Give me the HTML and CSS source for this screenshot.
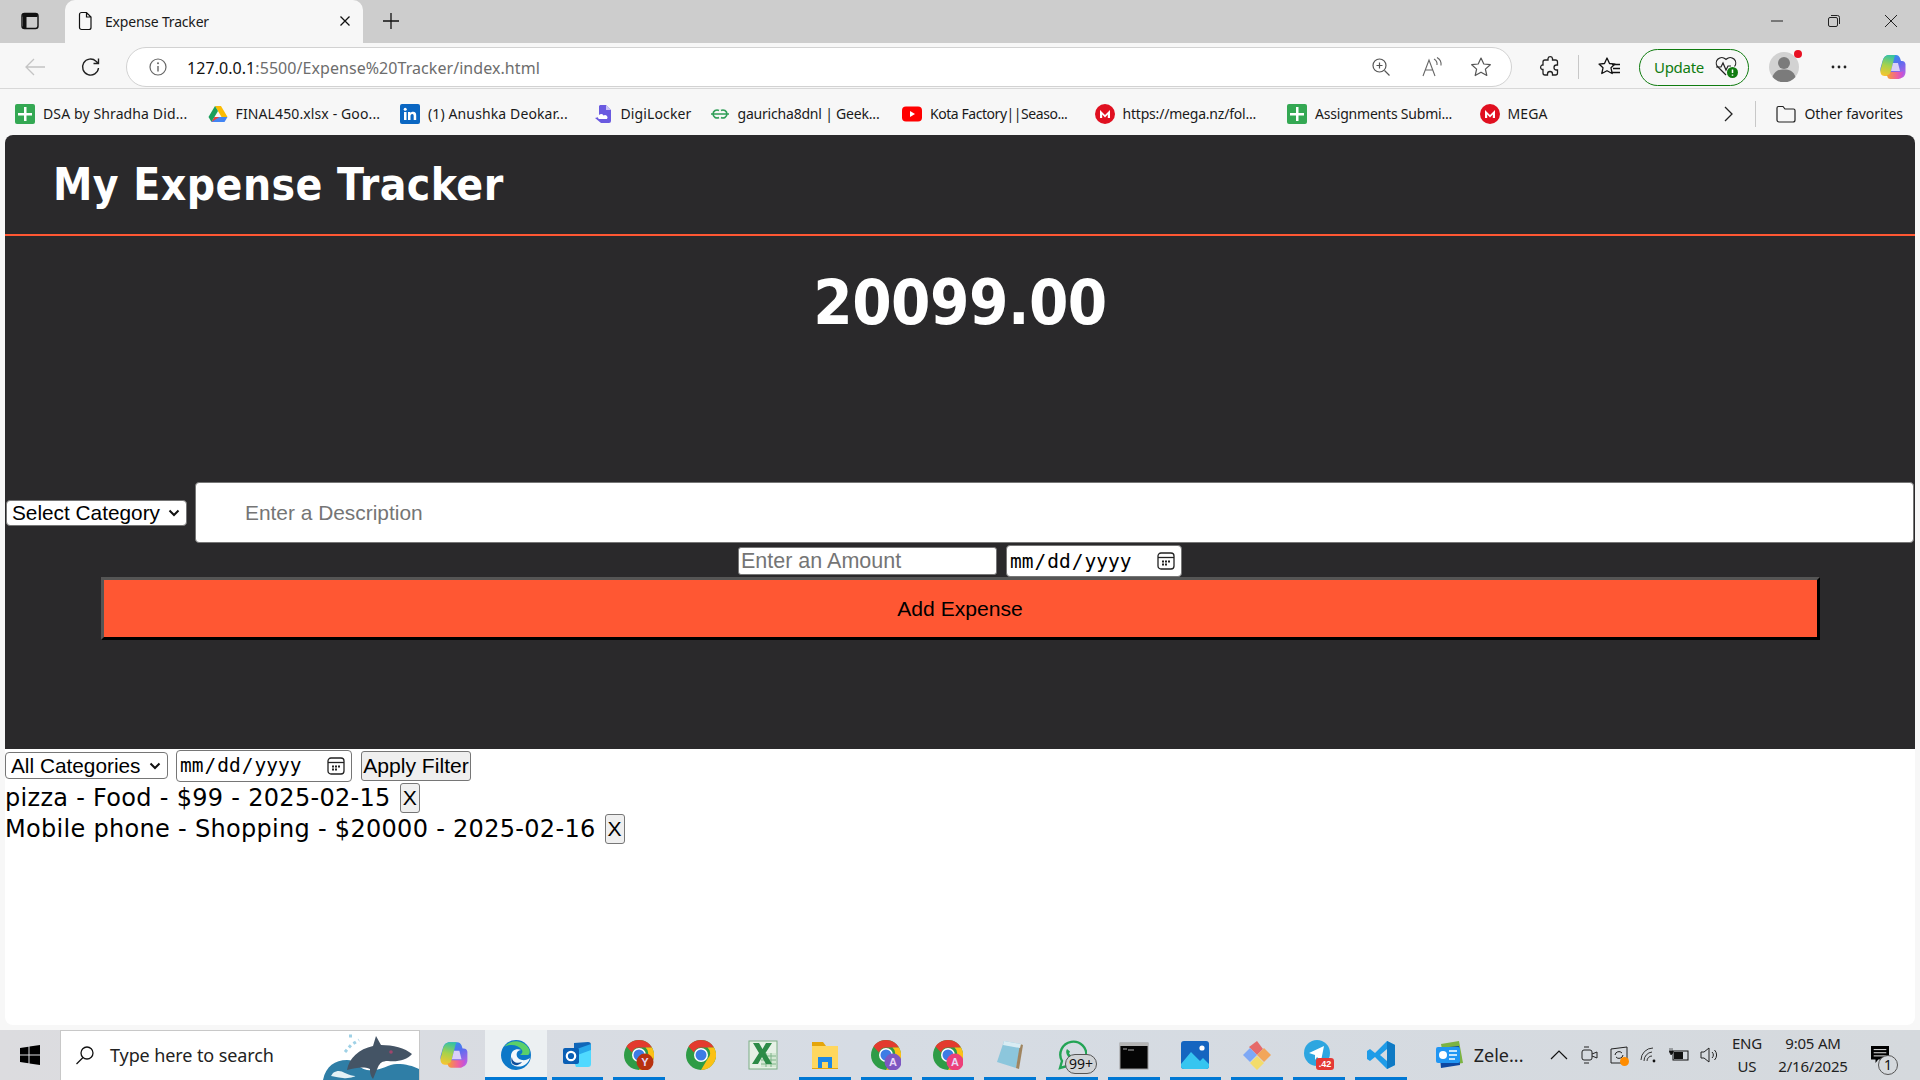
FILE: index.html
```html
<!DOCTYPE html>
<html lang="en">
<head>
<meta charset="utf-8">
<title>Expense Tracker</title>
<link rel="stylesheet" href="styles.css">
</head>
<body>
<div class="tabbar">
  <svg class="ico sidebar" viewBox="0 0 20 20"><rect x="2" y="2.5" width="16" height="15" rx="2.5" fill="none" stroke="#111" stroke-width="1.4"/><path d="M2.5 3h15v3h-15zM3 6h3.500v11H3z" fill="#111"/></svg>
  <div class="tab">
    <svg class="ico doc" viewBox="0 0 20 20"><path d="M4.5 3.5a2 2 0 0 1 2-2h5l4.500 4.500v10.500a2 2 0 0 1-2 2h-7.500a2 2 0 0 1-2-2zM11.500 1.500v4.500h4.500" fill="none" stroke="#111" stroke-width="1.200"/></svg>
    <span class="tabtitle">Expense Tracker</span>
    <svg class="ico tabx" viewBox="0 0 12 12"><path d="M1.500 1.500l9 9M10.500 1.500l-9 9" stroke="#111" stroke-width="1.300"/></svg>
  </div>
  <svg class="ico plus" viewBox="0 0 18 18"><path d="M9 1v16M1 9h16" stroke="#111" stroke-width="1.300"/></svg>
  <div class="winctl">
    <svg class="ico" viewBox="0 0 14 14"><path d="M1 7h12" stroke="#222" stroke-width="1"/></svg>
    <svg class="ico" viewBox="0 0 14 14"><rect x="1.500" y="3.500" width="9" height="9" rx="1.500" fill="none" stroke="#222"/><path d="M4 1.500h6.500a2 2 0 0 1 2 2V10" fill="none" stroke="#222"/></svg>
    <svg class="ico" viewBox="0 0 14 14"><path d="M1 1l12 12M13 1L1 13" stroke="#222" stroke-width="1"/></svg>
  </div>
</div>

<div class="toolbar">
  <svg class="ico back" viewBox="0 0 22 22"><path d="M21 11H2M10 3l-8 8 8 8" fill="none" stroke="#c4c4c4" stroke-width="1.300"/></svg>
  <svg class="ico reload" viewBox="0 0 22 22"><path d="M18.500 12a8 8 0 1 1-2.500-6.800l2.500 2.300M18.500 2.500v5h-5" fill="none" stroke="#222" stroke-width="1.400"/></svg>
  <div class="address">
    <svg class="ico info" viewBox="0 0 20 20"><circle cx="10" cy="10" r="8" fill="none" stroke="#666" stroke-width="1.200"/><path d="M10 9v5.500" stroke="#666" stroke-width="1.400"/><circle cx="10" cy="6.300" r="1" fill="#666"/></svg>
    <span class="url"><span class="host">127.0.0.1</span>:5500/Expense%20Tracker/index.html</span>
    <svg class="ico zoomi" viewBox="0 0 20 20"><circle cx="8.500" cy="8.500" r="6.500" fill="none" stroke="#555" stroke-width="1.200"/><path d="M13.500 13.500l5 5M8.500 5.500v6M5.500 8.500h6" stroke="#555" stroke-width="1.200"/></svg>
    <svg class="ico aloud" viewBox="0 0 22 22"><path d="M2 20L8 4l6 16M4.500 14h7" fill="none" stroke="#666" stroke-width="1.100"/><path d="M13 3a6 6 0 0 1 3 6M16 1.500a8 8 0 0 1 4 8" fill="none" stroke="#666" stroke-width="1.100"/></svg>
    <svg class="ico star" viewBox="0 0 22 22"><path d="M11 2l2.800 6 6.500.7-4.900 4.400 1.400 6.400L11 16.200l-5.800 3.300 1.400-6.400L1.700 8.700 8.200 8z" fill="none" stroke="#555" stroke-width="1.200" stroke-linejoin="round"/></svg>
  </div>
  <svg class="ico ext" viewBox="0 0 22 22"><path d="M9 2.500a2.300 2.300 0 0 1 4.500 0V4h3a2 2 0 0 1 2 2v3h-1a2.500 2.500 0 0 0 0 5h1v3a2 2 0 0 1-2 2h-3v-1a2.500 2.500 0 0 0-5 0v1H6a2 2 0 0 1-2-2v-3.500H3a2.500 2.500 0 0 1 0-4.500h1V6a2 2 0 0 1 2-2h3z" fill="none" stroke="#222" stroke-width="1.300"/></svg>
  <span class="vdiv"></span>
  <svg class="ico favs" viewBox="0 0 24 22"><path d="M10 2l2.500 5.500 5.500.6-4 3.700 1.200 5.700L10 14.700 4.800 17.500 6 11.800 2 8.100l5.500-.6z" fill="none" stroke="#111" stroke-width="1.300" stroke-linejoin="round"/><path d="M15 8.500h8M16 12.500h7M15 16.500h8" stroke="#111" stroke-width="1.300"/></svg>
  <div class="update">
    <span>Update</span>
    <svg class="ico pulse" viewBox="0 0 26 24"><path d="M12 20L3.500 11.500a5.500 5.500 0 0 1 8-7.500l.5.500.5-.5a5.500 5.500 0 0 1 8 7.500" fill="none" stroke="#222" stroke-width="1.200"/><path d="M2 12h5l2-4 3 7 2-4h3" fill="none" stroke="#222" stroke-width="1.200"/><circle cx="18.500" cy="17.500" r="5.500" fill="#107c10"/><path d="M18.500 14.500v3.500M18.500 19.500v1.200" stroke="#fff" stroke-width="1.500"/></svg>
  </div>
  <div class="avatar">
    <svg class="ico avatarimg" viewBox="0 0 30 30"><circle cx="15" cy="15" r="15" fill="#d2d2d2"/><circle cx="15" cy="11" r="6" fill="#7b7b7b"/><path d="M3.500 25c2-6 6-7.500 11.500-7.500S24.500 19 26.500 25A15 15 0 0 1 3.500 25z" fill="#7b7b7b"/></svg>
    <span class="reddot"></span>
  </div>
  <svg class="ico dots" viewBox="0 0 18 6"><circle cx="3" cy="3" r="1.400" fill="#222"/><circle cx="9" cy="3" r="1.400" fill="#222"/><circle cx="15" cy="3" r="1.400" fill="#222"/></svg>
  <svg class="ico copilot" viewBox="0 0 28 28"><defs><linearGradient id="cpA" x1="0.200" y1="0" x2="0.800" y2="1"><stop offset="0" stop-color="#1f9fe8"/><stop offset=".5" stop-color="#5b6cf0"/><stop offset="1" stop-color="#c060e0"/></linearGradient><linearGradient id="cpB" x1="0.500" y1="0" x2="0.300" y2="1"><stop offset="0" stop-color="#38c4a0"/><stop offset=".5" stop-color="#a8d24a"/><stop offset="1" stop-color="#f7c530"/></linearGradient><linearGradient id="cpC" x1="0" y1="0" x2="1" y2="0"><stop offset="0" stop-color="#f7a030"/><stop offset=".6" stop-color="#f0609c"/><stop offset="1" stop-color="#c050e0"/></linearGradient></defs><path d="M10 2h7c2 0 3 1 4 3l1 3h1c2 0 3 1 3.500 3v8c0 3-2 6-5 6h-9c-2 0-3-1-3.500-3l-.5-2H5c-3 0-4-2-3.500-5l2-7c1-4 3-6 6.500-6z" fill="url(#cpA)"/><path d="M10 2c-3 0-5 2-6 5L1.500 17c-.5 3 1 6 4 6h3c1.500 0 2.500-1 3-3l3-12c.5-2 1-5 2-6z" fill="url(#cpB)"/><path d="M8 22c2 0 3-1 3.500-3h8c2 0 3.500 0 5-1 0 5-2 8-5 8h-8c-2 0-3-1-3.500-4z" fill="url(#cpC)"/><path d="M14 10h5l2 8h-9z" fill="#d9d0f8"/></svg>
</div>

<div class="bookmarks">
  <div class="bm"><svg class="ico fav" viewBox="0 0 20 20"><rect width="20" height="20" rx="2" fill="#34a853"/><path d="M9 3h2.500v6H17v2.500h-5.500V17H9v-5.500H3V9h6z" fill="#fff"/></svg><span>DSA by Shradha Did...</span></div>
  <div class="bm"><svg class="ico fav" viewBox="0 0 20 20"><path d="M7 2h6l6.500 11h-6z" fill="#fbbc04"/><path d="M7 2L.5 13l3 5L10 7z" fill="#1a9f5b"/><path d="M3.500 18h13l3-5H6.500z" fill="#4285f4"/><path d="M3.500 18l3-5h5z" fill="#ea4335"/></svg><span>FINAL450.xlsx - Goo...</span></div>
  <div class="bm"><svg class="ico fav" viewBox="0 0 20 20"><rect width="20" height="20" rx="2" fill="#0a66c2"/><path d="M4 8h2.500v8H4zM8 8h2.500v1.200C11 8.300 12 7.800 13.200 7.800c2.200 0 3 1.300 3 3.700V16h-2.500v-4c0-1.300-.4-2-1.400-2s-1.800.7-1.800 2v4H8z" fill="#fff"/><circle cx="5.200" cy="5.200" r="1.500" fill="#fff"/></svg><span>(1) Anushka Deokar...</span></div>
  <div class="bm bm-short"><svg class="ico fav" viewBox="0 0 20 20"><path d="M7 1h6l5 5v11a2 2 0 0 1-2 2H8L2 14l4-1V2z" fill="#6a5ae0"/><path d="M13 1v5h5z" fill="#c9c2f7"/><path d="M5 13a3 3 0 0 1 5.500-1.500A2.500 2.500 0 0 1 14 15H6a2 2 0 0 1-1-2z" fill="#fff"/></svg><span>DigiLocker</span></div>
  <div class="bm bm-tight"><svg class="ico fav" viewBox="0 0 20 20"><path d="M1 10h18M9 6.500a4 4 0 1 0 0 7M11 6.500a4 4 0 1 1 0 7" fill="none" stroke="#2f9e57" stroke-width="1.600"/></svg><span>gauricha8dnl | Geek...</span></div>
  <div class="bm bm-tighter"><svg class="ico fav" viewBox="0 0 20 20"><rect y="2.500" width="20" height="15" rx="4" fill="#f00"/><path d="M8 7l5 3-5 3z" fill="#fff"/></svg><span>Kota Factory||Seaso...</span></div>
  <div class="bm bm-tight"><svg class="ico fav" viewBox="0 0 20 20"><circle cx="10" cy="10" r="10" fill="#e01020"/><path d="M5 14V6l5 5 5-5v8h-2.200V10.500L10 13.500 7.200 10.500V14z" fill="#fff"/></svg><span>https://mega.nz/fol...</span></div>
  <div class="bm bm-tight"><svg class="ico fav" viewBox="0 0 20 20"><rect width="20" height="20" rx="2" fill="#34a853"/><path d="M9 3h2.500v6H17v2.500h-5.500V17H9v-5.500H3V9h6z" fill="#fff"/></svg><span>Assignments Submi...</span></div>
  <div class="bm bm-last"><svg class="ico fav" viewBox="0 0 20 20"><circle cx="10" cy="10" r="10" fill="#e01020"/><path d="M5 14V6l5 5 5-5v8h-2.200V10.500L10 13.500 7.200 10.500V14z" fill="#fff"/></svg><span>MEGA</span></div>
  <svg class="ico chev" viewBox="0 0 12 18"><path d="M3 2l7 7-7 7" fill="none" stroke="#222" stroke-width="1.300"/></svg>
  <span class="vdiv vdiv-bm"></span>
  <div class="bm bm-other"><svg class="ico folder" viewBox="0 0 22 20"><path d="M2 4a1.500 1.500 0 0 1 1.500-1.500h4.500L10 5h8.500A1.500 1.500 0 0 1 20 6.500V16a2 2 0 0 1-2 2H4a2 2 0 0 1-2-2z" fill="none" stroke="#222" stroke-width="1.200"/></svg><span>Other favorites</span></div>
</div>

<div class="viewport">
  <main class="page">
    <section class="dark">
      <header class="head"><h1 class="title">My Expense Tracker</h1></header>
      <div class="total">20099.00</div>
      <form class="form">
        <div class="row-top">
          <span class="selwrap selwrap-cat">
            <select class="sel sel-cat"><option>Select Category</option></select>
            <svg class="selchev" viewBox="0 0 12 8"><path d="M1.500 1.500L6 6l4.500-4.500" fill="none" stroke="#111" stroke-width="2"/></svg>
          </span>
          <input class="desc" type="text" placeholder="Enter a Description">
        </div>
        <div class="row-mid">
          <input class="amount" type="text" placeholder="Enter an Amount">
          <span class="datewrap">
            <input class="date" type="date">
            <svg class="cal" viewBox="0 0 18 18"><rect x="1" y="1" width="16" height="16" rx="3" fill="none" stroke="#222" stroke-width="1.300"/><path d="M1 5.500h16" stroke="#222" stroke-width="1.300"/><path d="M5 8.500h2v2H5zM8 8.500h2v2H8zM11 8.500h2v2h-2zM5 11.500h2v2H5zM8 11.500h2v2H8z" fill="#222"/></svg>
          </span>
        </div>
        <button class="add" type="button">Add Expense</button>
      </form>
    </section>
    <section class="light">
      <div class="filter">
        <span class="selwrap selwrap-all">
          <select class="sel sel-all"><option>All Categories</option></select>
          <svg class="selchev" viewBox="0 0 12 8"><path d="M1.500 1.500L6 6l4.500-4.500" fill="none" stroke="#111" stroke-width="2"/></svg>
        </span>
        <span class="datewrap datewrap-filter">
          <input class="date date-filter" type="date">
          <svg class="cal" viewBox="0 0 18 18"><rect x="1" y="1" width="16" height="16" rx="3" fill="none" stroke="#222" stroke-width="1.300"/><path d="M1 5.500h16" stroke="#222" stroke-width="1.300"/><path d="M5 8.500h2v2H5zM8 8.500h2v2H8zM11 8.500h2v2h-2zM5 11.500h2v2H5zM8 11.500h2v2H8z" fill="#222"/></svg>
        </span>
        <button class="apply" type="button">Apply Filter</button>
      </div>
      <ul class="list">
        <li class="item">pizza - Food - $99 - 2025-02-15<button class="del" type="button">X</button></li>
        <li class="item">Mobile phone - Shopping - $20000 - 2025-02-16<button class="del" type="button">X</button></li>
      </ul>
    </section>
  </main>
</div>

<footer class="taskbar">
  <div class="start"><svg class="ico winlogo" viewBox="0 0 20 20"><path d="M0 3l8.500-1.300V9.500H0zM9.500 1.500L20 0v9.500H9.500zM0 10.500h8.500v7.800L0 17zM9.500 10.500H20V20L9.500 18.500z" fill="#000"/></svg></div>
  <div class="search">
    <svg class="ico lens" viewBox="0 0 20 20"><circle cx="12" cy="8" r="6" fill="none" stroke="#111" stroke-width="1.300"/><path d="M8 12.500L1.500 19" stroke="#111" stroke-width="1.300"/></svg>
    <span class="searchtext">Type here to search</span>
    <svg class="whale" viewBox="0 0 96 50"><path d="M0 50c3-14 12-20 24-20 8 0 10 8 20 10 14 2 20-6 30-6 9 0 16 2 22 5v11z" fill="#2f7ea6"/><path d="M10 43c5-3 8-2 12 0s8 3 10 3-6 3-12 2-8-1-12-2z" fill="#e4f1f5"/><path d="M24 40c2-12 12-21 26-24l3-10 5 9c12 0 24 3 31 9-5 6-14 8-24 7-6 0-8 2-10 6l-5 12c-3-4-3-7-3-10-7-3-14-1-23 1z" fill="#445465"/><circle cx="68" cy="22" r="1.800" fill="#a0456c"/><path d="M22 22l6-7 8-5M26 6h6" fill="none" stroke="#9fd1e6" stroke-width="3" stroke-dasharray="3 3"/></svg>
  </div>
  <div class="apps">
    <div class="app"><svg class="ico appi" viewBox="0 0 28 28"><path d="M10 2h7c2 0 3 1 4 3l1 3h1c2 0 3 1 3.500 3v8c0 3-2 6-5 6h-9c-2 0-3-1-3.500-3l-.5-2H5c-3 0-4-2-3.500-5l2-7c1-4 3-6 6.500-6z" fill="url(#cpA)"/><path d="M10 2c-3 0-5 2-6 5L1.500 17c-.5 3 1 6 4 6h3c1.500 0 2.500-1 3-3l3-12c.5-2 1-5 2-6z" fill="url(#cpB)"/><path d="M8 22c2 0 3-1 3.500-3h8c2 0 3.500 0 5-1 0 5-2 8-5 8h-8c-2 0-3-1-3.500-4z" fill="url(#cpC)"/><path d="M14 10h5l2 8h-9z" fill="#d9d0f8"/></svg></div>
    <div class="app app-active"><svg class="ico appi" viewBox="0 0 30 30"><circle cx="15" cy="15" r="15" fill="#0c78c8"/><path d="M28 9A15 15 0 0 0 3 7c5-3 14-3 18 3 1 2 0 4-2 5h8c2-1 2-4 1-6z" fill="#5ad06a"/><path d="M10 16c0-5 5-8 10-6-6 0-6 9 1 10 3 .5 6-.5 8-2-2 7-10 11-17 7-3-2-2-6-2-9z" fill="#fff" opacity=".95"/><path d="M11 17c0 5 5 7 10 5-3 4-8 4-10 1-1-2-1-4 0-6z" fill="#0f4f9c"/></svg></div>
    <div class="app app-on"><svg class="ico appi" viewBox="0 0 30 30"><path d="M12 3l14-1c2 0 3 1 3 3v14c0 2-1 3-3 3H12z" fill="#1066b8"/><path d="M12 10l17-6v15c0 2-1 3-3 3H15z" fill="#28a8ea"/><path d="M10 17l19-7v14c0 2-1 3-3 3H14z" fill="#50d9ff"/><rect x="1" y="8" width="16" height="16" rx="2" fill="#0a5fb5"/><circle cx="9" cy="16" r="4.200" fill="none" stroke="#fff" stroke-width="2.200"/></svg></div>
    <div class="app app-on"><svg class="ico appi" viewBox="0 0 30 30"><use href="#chrome"/><circle cx="21" cy="22" r="8.500" fill="#b83210"/><text class="badge-letter" x="21" y="26">Y</text></svg></div>
    <div class="app"><svg class="ico appi" viewBox="0 0 30 30"><g id="chrome"><circle cx="15" cy="15" r="15" fill="#2e9c46"/><path d="M15 0a15 15 0 0 1 13 7.500H15a7.500 7.500 0 0 0-7 5L2.500 6.500A15 15 0 0 1 15 0z" fill="#e33b2e"/><path d="M28 7.500A15 15 0 0 1 15 30l6.500-11a7.500 7.500 0 0 0 0-11.500z" fill="#fbc116"/><circle cx="15" cy="15" r="7" fill="#fff"/><circle cx="15" cy="15" r="5.500" fill="#3d7ce5"/></g></svg></div>
    <div class="app"><svg class="ico appi" viewBox="0 0 30 30"><rect x="1" y="1" width="28" height="28" fill="#e6f1e6" stroke="#7dae85"/><rect x="13" y="13" width="15" height="14" fill="#d3e8d3"/><path d="M13 16h15M13 20h15M13 24h15M18 13v14M23 13v14" stroke="#7eb48a"/><path d="M5 3h6l3.500 6L18 3h6l-6.500 10L24 24h-6l-4-7-4 7H4l7-11z" fill="#2c8b47"/></svg></div>
    <div class="app app-on"><svg class="ico appi" viewBox="0 0 30 30"><path d="M2 2h11l3 4h12v23H2z" fill="#e5a50a"/><rect x="2" y="6" width="26" height="22" fill="#ffd75e"/><path d="M8 28V17h14v11h-4v-6h-6v6z" fill="#1e88e5"/></svg></div>
    <div class="app app-on"><svg class="ico appi" viewBox="0 0 30 30"><use href="#chrome"/><circle cx="22" cy="22" r="8.500" fill="#7e57c2"/><text class="badge-letter" x="22" y="26">A</text></svg></div>
    <div class="app app-on"><svg class="ico appi" viewBox="0 0 30 30"><use href="#chrome"/><circle cx="22" cy="22" r="8.500" fill="#ec407a"/><text class="badge-letter" x="22" y="26">A</text></svg></div>
    <div class="app app-on"><svg class="ico appi" viewBox="0 0 30 30"><path d="M9 1l17 3-5 24L2 22z" fill="#8cc6dc"/><path d="M25 4l3 1-4 24-3-1z" fill="#a08560"/><path d="M9 1l17 3-1 4L8 5z" fill="#d9ecf3"/></svg></div>
    <div class="app app-on">
      <svg class="ico appi" viewBox="0 0 30 30"><path d="M3 28l2-7A13 13 0 1 1 10 26z" fill="none" stroke="#23a455" stroke-width="2.400"/><path d="M10 9c-2 3 0 7 3 9.500s6 3 8 1l-3-3-2 1-4-4 1-2z" fill="#23a455"/></svg>
      <span class="badge99">99+</span>
    </div>
    <div class="app app-on"><svg class="ico appi" viewBox="0 0 30 30"><rect x="1" y="3" width="28" height="26" fill="#050505" stroke="#9a9a9a"/><rect x="1" y="3" width="28" height="3" fill="#b5b5b5"/><path d="M4 9h4M9 10h6" stroke="#aaa"/></svg></div>
    <div class="app app-on"><svg class="ico appi" viewBox="0 0 30 30"><rect x="1" y="1" width="28" height="28" rx="3" fill="#1565c0"/><circle cx="22" cy="8" r="2.600" fill="#fff"/><path d="M1 24l10-12 9 9 3-3 6 6v2a3 3 0 0 1-3 3H4a3 3 0 0 1-3-3z" fill="#36c5f0"/></svg></div>
    <div class="app app-on"><svg class="ico appi" viewBox="0 0 30 30"><path d="M15 15L7 7l8-6 6 8z" fill="#e66a6a"/><path d="M8 8l7 7-7 7-7-7z" fill="#7ea8f5"/><path d="M15 15l7-7 7 7-7 7z" fill="#f2a65a"/><path d="M15 16l7 7-7 7-7-7z" fill="#f3dc6b"/></svg></div>
    <div class="app app-on"><svg class="ico appi" viewBox="0 0 30 30"><circle cx="13" cy="13" r="13" fill="#2ea6e0"/><path d="M5 13l15-7-3 15-4-4-2 3v-5z" fill="#fff"/><rect x="12" y="18" width="18" height="12" rx="3" fill="#e53935"/><text class="badge-42" x="21" y="27">.42</text></svg></div>
    <div class="app app-on"><svg class="ico appi" viewBox="0 0 30 30"><path d="M21 1l8 4v20l-8 4L9 17l-5 4-3-2v-8l3-2 5 4zM21 9l-7 6 7 6z" fill="#1f9ce8" fill-rule="evenodd"/><path d="M21 1l8 4v20l-8 4z" fill="#0f7ac4"/></svg></div>
    <div class="app app-wide"><svg class="ico appi" viewBox="0 0 30 30"><path d="M6 4l18-3 4 22-18 3z" fill="#7cb342"/><path d="M4 8l20-2 1 19-19 3z" fill="#0d47a1"/><rect x="1" y="7" width="24" height="16" rx="2" fill="#2196f3"/><circle cx="8" cy="15" r="4" fill="#fff"/><path d="M14 11h8M14 15h8M14 19h6" stroke="#fff" stroke-width="1.600"/></svg><span class="apptext">Zele...</span></div>
  </div>
  <div class="tray">
    <svg class="ico tr" viewBox="0 0 20 20"><path d="M2 14l8-8 8 8" fill="none" stroke="#111" stroke-width="1.200"/></svg>
    <svg class="ico tr" viewBox="0 0 20 20"><path d="M5 2h5M5 18h5" stroke="#222"/><rect x="3" y="5" width="10" height="10" rx="2" fill="none" stroke="#222"/><path d="M13 9l5-2v6l-5-2" fill="none" stroke="#222"/></svg>
    <div class="tr-wrap"><svg class="ico tr" viewBox="0 0 20 20"><path d="M2 4l16-2v16H2z" fill="none" stroke="#222"/><path d="M6 10a4 4 0 0 1 7-2M14 10a4 4 0 0 1-7 2" fill="none" stroke="#222"/></svg><span class="orange"></span></div>
    <svg class="ico tr" viewBox="0 0 20 20"><path d="M2 15a12 12 0 0 1 12-12M5 16a9 9 0 0 1 8-9M8 16a5 5 0 0 1 5-5" fill="none" stroke="#333"/><circle cx="15" cy="16" r="1.400" fill="#111"/></svg>
    <svg class="ico tr" viewBox="0 0 20 20"><rect x="4" y="6" width="15" height="9" fill="none" stroke="#111"/><rect x="5" y="7" width="9" height="7" fill="#111"/><path d="M1 3v3M3 3v3M0 6h4v2l-2 2z" fill="#111" stroke="#111" stroke-width=".6"/></svg>
    <svg class="ico tr" viewBox="0 0 20 20"><path d="M2 7h3l5-4v14l-5-4H2z" fill="none" stroke="#222"/><path d="M13 7a4 4 0 0 1 0 6M15.500 5a7 7 0 0 1 0 10" fill="none" stroke="#222"/></svg>
    <div class="lang"><span>ENG</span><span>US</span></div>
    <div class="clock"><span>9:05 AM</span><span>2/16/2025</span></div>
    <div class="notif">
      <svg class="ico msg" viewBox="0 0 20 20"><path d="M0 0h20v15H8l-3 4v-4H0z" fill="#000"/><path d="M3 4h14M3 7.500h14M3 11h14" stroke="#fff"/></svg>
      <span class="notif-n">1</span>
    </div>
  </div>
</footer>
</body>
</html>
```
FILE: styles.css
```css
* { box-sizing: border-box; }
html, body { margin: 0; padding: 0; }
body { width: 1920px; height: 1080px; overflow: hidden; background: #f7f7f7; font-family: "Liberation Sans", Arial, sans-serif; display: flex; flex-direction: column; }
.ico { display: block; flex: none; }

/* tab strip */
.tabbar { height: 43px; flex: none; background: #cdcdcd; display: flex; align-items: center; padding-bottom: 1px; }
.sidebar { width: 20px; height: 20px; margin-left: 20px; }
.tab { width: 298px; height: 43px; margin: 0 0 -1px 25px; background: #f7f7f7; border-radius: 10px 10px 0 0; display: flex; align-items: center; padding: 0 12px 1px 10px; }
.doc { width: 20px; height: 20px; }
.tabtitle { font-size: 14px; color: #1a1a1a; margin-left: 10px; flex: 1; font-family: "Noto Sans", sans-serif; letter-spacing: -0.2px; }
.tabx { width: 12px; height: 12px; }
.plus { width: 18px; height: 18px; margin-left: 19px; }
.winctl { margin-left: auto; display: flex; gap: 43px; padding-right: 22px; }
.winctl .ico { width: 14px; height: 14px; }

/* toolbar */
.toolbar { height: 45px; flex: none; display: flex; align-items: center; background: #f7f7f7; padding-top: 3px; }
.back { width: 22px; height: 22px; margin-left: 24px; }
.reload { width: 22px; height: 22px; margin-left: 34px; }
.address { width: 1386px; height: 40px; margin-left: 24px; background: #fff; border: 1px solid #d2d2d2; border-radius: 20px; display: flex; align-items: center; padding-left: 21px; }
.info { width: 20px; height: 20px; }
.url { font-size: 16px; color: #6d6d6d; margin-left: 19px; padding-top: 2px; flex: 1; font-family: "Noto Sans", sans-serif; letter-spacing: 0.06px; }
.host { color: #111; }
.zoomi { width: 20px; height: 20px; margin-right: 30px; }
.aloud { width: 22px; height: 22px; margin-right: 27px; }
.star { width: 22px; height: 22px; margin-right: 19px; }
.ext { width: 22px; height: 22px; margin-left: 27px; }
.vdiv { width: 1px; height: 24px; background: #c8c8c8; margin-left: 17px; flex: none; }
.favs { width: 24px; height: 22px; margin-left: 18px; }
.update { width: 110px; height: 37px; margin-left: 18px; border: 1px solid #107c10; border-radius: 19px; display: flex; align-items: center; padding-left: 14px; gap: 10px; color: #107c10; font-size: 15px; font-family: "Noto Sans", sans-serif; letter-spacing: -0.3px; }
.pulse { width: 26px; height: 24px; }
.avatar { position: relative; margin-left: 20px; width: 30px; height: 30px; }
.avatarimg { width: 30px; height: 30px; }
.reddot { position: absolute; width: 8px; height: 8px; border-radius: 50%; background: #e81123; right: -3px; top: -2px; }
.dots { width: 18px; height: 6px; margin-left: 31px; }
.copilot { width: 28px; height: 28px; margin-left: 31px; }

/* bookmarks */
.bookmarks { height: 47px; flex: none; display: flex; align-items: center; padding: 3px 0 0 15px; background: #f7f7f7; border-top: 1px solid #d8d8d8; }
.bm { width: 192.5px; display: flex; align-items: center; gap: 8px; font-size: 14px; color: #1a1a1a; font-family: "Noto Sans", sans-serif; letter-spacing: 0.12px; white-space: nowrap; flex: none; }
.bm-short { width: 117px; }
.bm-tight { letter-spacing: -0.2px; }
.bm-tighter { letter-spacing: -0.45px; }
.bm-last { width: auto; }
.fav { width: 20px; height: 20px; }
.chev { width: 12px; height: 18px; margin-left: auto; }
.vdiv-bm { margin-left: 21px; height: 26px; }
.bm-other { width: auto; margin-left: 19px; padding-right: 17px; gap: 7px; letter-spacing: -0.05px; }
.folder { width: 22px; height: 20px; }

/* page */
.viewport { padding: 0 5px 5px; height: 895px; flex: none; }
.page { height: 890px; background: #fff; border-radius: 8px; overflow: hidden; display: flex; flex-direction: column; }
.dark { height: 614px; background: #2a292b; color: #fff; flex: none; }
.head { height: 101px; border-bottom: 2px solid #ff5733; padding-left: 48px; display: flex; align-items: center; }
.title { margin: 0; font-family: "DejaVu Sans Condensed", "DejaVu Sans", sans-serif; font-stretch: condensed; font-size: 44px; font-weight: 700; letter-spacing: 0.45px; }
.total { height: 134px; font-family: "DejaVu Sans Condensed", "DejaVu Sans", sans-serif; font-stretch: condensed; font-size: 63px; font-weight: 700; text-align: center; line-height: 134px; letter-spacing: -0.5px; }
.form { padding-top: 112px; }
.row-top { display: flex; align-items: center; gap: 8px; padding: 0 1px 0 1px; }
.selwrap { position: relative; display: block; flex: none; }
.selwrap-cat { width: 181px; height: 26px; }
.selwrap-all { width: 163px; height: 27px; }
.sel { appearance: none; -webkit-appearance: none; display: block; width: 100%; height: 100%; padding: 0 0 0 5px; font: 20.8px "Liberation Sans", Arial, sans-serif; color: #000; background: #fff; border: 1px solid #767676; border-radius: 4px; }
.selchev { position: absolute; right: 7px; top: 50%; width: 12px; height: 8px; margin-top: -4px; pointer-events: none; }
.desc { flex: 1; height: 61px; padding: 0 0 0 49px; font: 20.9px "Liberation Sans", Arial, sans-serif; background: #fff; border: 1px solid #767676; border-radius: 4px; }
.row-mid { display: flex; justify-content: center; align-items: center; gap: 9px; margin-top: 2px; height: 32px; }
.amount { width: 259px; height: 28px; padding: 0 2px; font: 21.5px "Liberation Sans", Arial, sans-serif; background: #fff; border: 1px solid #767676; border-radius: 3px; }
.datewrap { position: relative; display: block; width: 176px; height: 32px; flex: none; }
.date { display: block; width: 100%; height: 100%; font: 19.5px "DejaVu Sans Mono", monospace; color: #000; background: #fff; border: 1px solid #767676; border-radius: 4px; padding: 1px 2px; }
.date::-webkit-calendar-picker-indicator { opacity: 0; }
.cal { position: absolute; right: 7px; top: 7px; width: 18px; height: 18px; pointer-events: none; }
.add { display: block; width: 90%; height: 63px; margin: 0 auto; background: #ff5733; font: 21.12px "Liberation Sans", Arial, sans-serif; color: #000; border: 3px solid; border-color: #555 #000 #000 #555; padding: 0; }

/* lower */
.light { flex: 1; }
.filter { display: flex; align-items: center; height: 33px; gap: 8px; }
.apply { height: 30px; width: 110px; font: 21.12px "Liberation Sans", Arial, sans-serif; padding: 0; margin-left: 1px; border: 1px solid #767676; border-radius: 3px; background: #efefef; color: #000; }
.list { margin: 0; padding: 0; list-style: none; }
.item { height: 31px; display: flex; align-items: center; gap: 9px; font-family: "DejaVu Sans", sans-serif; font-size: 24px; letter-spacing: 0.3px; color: #000; white-space: pre; }
.del { height: 30px; width: 20px; padding: 0; font: 21.12px "Liberation Sans", sans-serif; border: 1px solid #767676; border-radius: 3px; background: #efefef; color: #000; }

/* taskbar */
.taskbar { height: 50px; flex: none; display: flex; align-items: stretch; background: linear-gradient(90deg, #dcdcdf, #d6dce4 45%, #d5d9dd); }
.start { width: 60px; display: flex; align-items: center; justify-content: center; }
.winlogo { width: 20px; height: 20px; }
.search { width: 360px; background: #fff; border: 1px solid #c8c8c8; border-bottom: 0; display: flex; align-items: center; padding: 0 0 1px 14px; position: relative; overflow: hidden; }
.lens { width: 20px; height: 20px; }
.searchtext { font-size: 18px; color: #222; margin-left: 15px; font-family: "Noto Sans", sans-serif; letter-spacing: -0.1px; }
.whale { position: absolute; right: 0; bottom: 0; width: 96px; height: 50px; }
.apps { display: flex; margin-left: 3px; }
.app { width: 61.8px; position: relative; display: flex; align-items: center; justify-content: center; border-bottom: 3px solid transparent; padding-top: 3px; }
.appi { width: 30px; height: 30px; }
.app-active { background: #ecf0f2; border-bottom-color: #0078d4; }
.app-on::after { content: ""; position: absolute; left: 5px; right: 5px; bottom: -3px; height: 3px; background: #0078d4; }
.app-wide { width: 110px; justify-content: flex-start; padding-left: 23px; gap: 9px; }
.apptext { font-size: 18px; color: #222; font-family: "Noto Sans", sans-serif; }
.badge-letter { font: 700 11px "Liberation Sans", sans-serif; fill: #e8d8f8; text-anchor: middle; }
.badge-42 { font: 700 9px "Liberation Sans", sans-serif; fill: #fff; text-anchor: middle; }
.badge99 { position: absolute; left: 24px; top: 24px; height: 20px; padding: 0 3px; border: 1px solid #555; border-radius: 10px; background: #d0d3d6; color: #111; font: 14px "Noto Sans", sans-serif; line-height: 18px; }
.tray { margin-left: auto; display: flex; align-items: center; gap: 10px; padding-right: 21px; }
.tr { width: 20px; height: 20px; }
.tr-wrap { position: relative; }
.orange { position: absolute; width: 9px; height: 9px; border-radius: 50%; background: #ff8c00; right: 0; bottom: -1px; }
.lang, .clock { display: flex; flex-direction: column; align-items: center; font: 15px/23px "Noto Sans", sans-serif; color: #222; letter-spacing: -0.2px; }
.lang { margin-left: 3px; }
.clock { margin-left: 2px; width: 78px; }
.notif { position: relative; width: 36px; height: 36px; margin-left: 1px; display: flex; align-items: center; }
.msg { width: 18px; height: 20px; margin-left: 8px; }
.notif-n { position: absolute; right: 1px; bottom: -2px; width: 20px; height: 20px; border-radius: 50%; border: 1px solid #555; background: #d5d9dd; font: 14px/18px "Noto Sans", sans-serif; text-align: center; color: #111; }
```
